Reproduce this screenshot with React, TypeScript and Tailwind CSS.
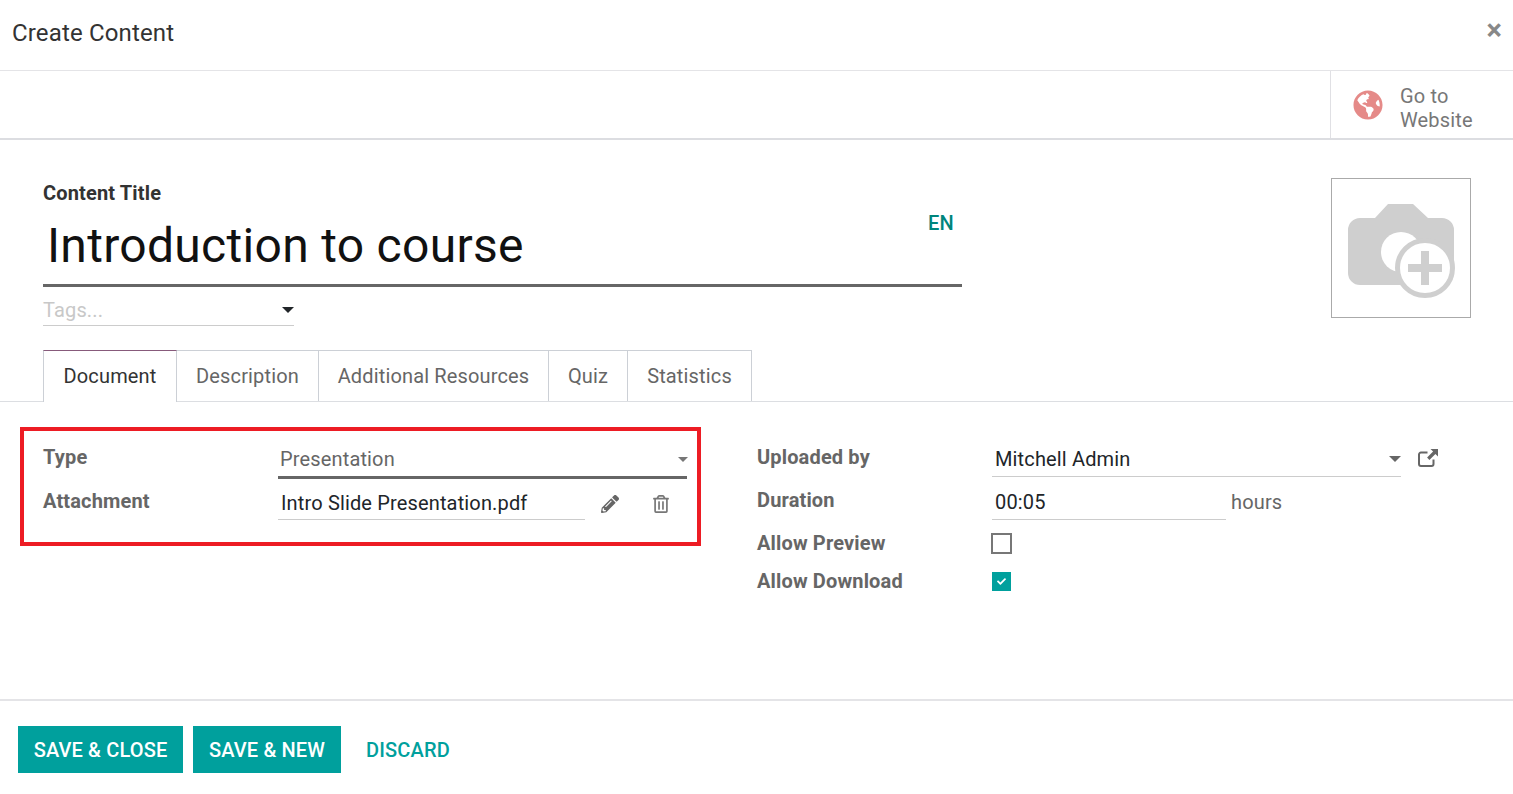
import { FaGlobeAmericas, FaPencilAlt, FaRegTrashAlt, FaCheck } from "react-icons/fa";

const Caret = ({ className }: { className: string }) => (
  <span className={`h-0 w-0 border-x-transparent border-t-solid ${className}`} />
);

const ExternalLink = () => (
  <svg viewBox="0 0 20 18" className="h-[18px] w-[20px] text-[#666]" fill="none" stroke="currentColor">
    <path d="M15.5 10.5v4.5a2 2 0 0 1-2 2H3a2 2 0 0 1-2-2V5.5a2 2 0 0 1 2-2h6.5" strokeWidth="2" />
    <path d="M12.5 0H20v7.5l-2.6-2.6-6 6-2.3-2.3 6-6z" fill="currentColor" stroke="none" />
  </svg>
);

const CameraPlus = () => (
  <svg viewBox="0 0 109 95" className="mt-[7px] h-[95px] w-[109px]">
    <path d="M13 14h15L41 0h25l15 14h14a12 12 0 0 1 12 12v43a12 12 0 0 1-12 12H13A12 12 0 0 1 1 69V26a12 12 0 0 1 12-12z" fill="#cfcfcf" />
    <circle cx="54" cy="48" r="20" fill="#fff" />
    <circle cx="78" cy="64" r="27.5" fill="#fff" stroke="#cfcfcf" strokeWidth="5" />
    <path d="M74 47h8v13h13v8H82v13h-8V68H61v-8h13z" fill="#cfcfcf" />
  </svg>
);

const tabs = [
  { name: "Description", width: "w-[142px]" },
  { name: "Additional Resources", width: "w-[230px]" },
  { name: "Quiz", width: "w-[79px]" },
  { name: "Statistics", width: "w-[124px]" },
];

const Label = ({ children, className = "" }: { children: string; className?: string }) => (
  <div className={`text-[20px] font-bold leading-[24px] text-[#666] ${className}`}>{children}</div>
);

export default function App() {
  return (
    <div className="flex h-[794px] w-[1513px] flex-col overflow-hidden bg-white font-['Roboto',sans-serif] text-[20px] tracking-[0.15px] text-[#212529]">
      <div className="flex h-[71px] items-start justify-between border-b border-[#e4e4e7] pl-[12px] pr-[11px]">
        <div className="pt-[18px] text-[24px] leading-[30px] text-[#333]">Create Content</div>
        <div className="pt-[13px] text-[29px] font-bold leading-[34px] text-[#888]">×</div>
      </div>

      <div className="flex h-[69px] justify-end border-b-2 border-[#dcdde1]">
        <div className="flex w-[183px] items-center border-l border-[#e0e0e4] pl-[22px]">
          <FaGlobeAmericas className="h-[30px] w-[30px] text-[#e58a88]" />
          <div className="ml-[17px] w-[90px] pt-[6px] text-[20px] leading-[24px] text-[#777]">Go to Website</div>
        </div>
      </div>

      <div className="flex flex-1 flex-col">
        <div className="flex justify-between pl-[43px] pr-[42px] pt-[38px]">
          <div className="w-[919px]">
            <div className="pt-[3px] text-[20px] font-bold leading-[24px] text-[#333]">Content Title</div>
            <div className="relative mt-[2px] flex h-[80px] items-center border-b-[3px] border-[#666] pl-[4px] text-[48px] leading-[60px] tracking-[0.3px] text-[#111]">
              Introduction to course
              <span className="absolute left-[885px] top-[4px] text-[20px] font-medium leading-[24px] tracking-[0.15px] text-[#00857c]">EN</span>
            </div>
            <div className="mt-[10px] flex h-[29px] w-[251px] items-center justify-between border-b border-[#ccc] pb-[2px] text-[20px] text-[#c8c8c8]">
              Tags...
              <Caret className="border-x-[6px] border-t-[6px] border-t-[#212529]" />
            </div>
          </div>
          <div className="flex h-[140px] w-[140px] items-center justify-center border border-[#aaa]">
            <CameraPlus />
          </div>
        </div>

        <div className="mt-[24px] flex h-[52px] border-b border-[#dcdee2] pl-[43px] text-[20px] leading-[24px]">
          <div className="flex h-[52px] w-[134px] items-center justify-center border-x border-t border-x-[#ccd0d6] border-t-[#875a7b] bg-white pb-[2px] text-[#333]">
            Document
          </div>
          {tabs.map((t) => (
            <div key={t.name} className={`flex h-[51px] items-center justify-center border-r border-t border-[#ccd0d6] text-[#666] ${t.width}`}>
              {t.name}
            </div>
          ))}
        </div>

        <div className="flex items-start pl-[20px] pt-[25px]">
          <div className="h-[119px] w-[681px] border-[4px] border-[#ed1c24] pl-[19px] pr-[10px] pt-[14px]">
            <div className="flex h-[33px] items-start">
              <Label className="w-[235px]">Type</Label>
              <div className="flex h-[34px] flex-1 items-center justify-between border-b-[3px] border-[#666] pb-[3px] pl-[2px] leading-[24px] text-[#666]">
                Presentation
                <Caret className="mr-[-1px] border-x-[5px] border-t-[5px] border-t-[#777]" />
              </div>
            </div>
            <div className="mt-[11px] flex items-start">
              <Label className="w-[235px]">Attachment</Label>
              <div className="mt-[-2px] flex h-[33px] w-[307px] items-center border-b border-[#ccc] pb-[1px] pl-[3px] text-[#212529]">
                Intro Slide Presentation.pdf
              </div>
              <FaPencilAlt className="ml-[16px] mt-[6px] h-[18px] w-[18px] text-[#666]" />
              <FaRegTrashAlt className="ml-[34px] mt-[6px] h-[18px] w-[16px] text-[#777]" />
            </div>
          </div>

          <div className="ml-[56px] pt-[18px]">
            <div className="flex h-[33px] items-start">
              <Label className="w-[235px]">Uploaded by</Label>
              <div className="flex h-[32px] w-[409px] items-center justify-between border-b border-[#ccc] pb-[3px] pl-[3px] text-[#212529]">
                Mitchell Admin
                <Caret className="border-x-[6px] border-t-[6px] border-t-[#666]" />
              </div>
              <span className="ml-[17px] mt-[4px]">
                <ExternalLink />
              </span>
            </div>
            <div className="mt-[10px] flex h-[33px] items-start">
              <Label className="w-[235px]">Duration</Label>
              <div className="flex h-[32px] w-[234px] items-center border-b border-[#ccc] pb-[3px] pl-[3px] text-[#212529]">
                00:05
              </div>
              <div className="ml-[5px] pt-[2px] leading-[24px] text-[#666]">hours</div>
            </div>
            <div className="mt-[10px] flex h-[24px] items-center">
              <Label className="w-[234px]">Allow Preview</Label>
              <div className="h-[21px] w-[21px] border-2 border-[#777]" />
            </div>
            <div className="mt-[14px] flex h-[24px] items-center">
              <Label className="w-[235px]">Allow Download</Label>
              <div className="flex h-[19px] w-[19px] items-center justify-center bg-[#00a09d]">
                <FaCheck className="h-[9px] w-[9px] text-white" />
              </div>
            </div>
          </div>
        </div>
      </div>

      <div className="flex h-[95px] items-start gap-[10px] border-t-2 border-[#e4e4e7] pl-[18px] pt-[25px] text-[20px] font-medium leading-[24px]">
        <div className="flex h-[47px] w-[165px] items-center justify-center bg-[#00a09d] text-white">SAVE &amp; CLOSE</div>
        <div className="flex h-[47px] w-[148px] items-center justify-center bg-[#00a09d] text-white">SAVE &amp; NEW</div>
        <div className="flex h-[47px] items-center pl-[15px] text-[#00a09d]">DISCARD</div>
      </div>
    </div>
  );
}
